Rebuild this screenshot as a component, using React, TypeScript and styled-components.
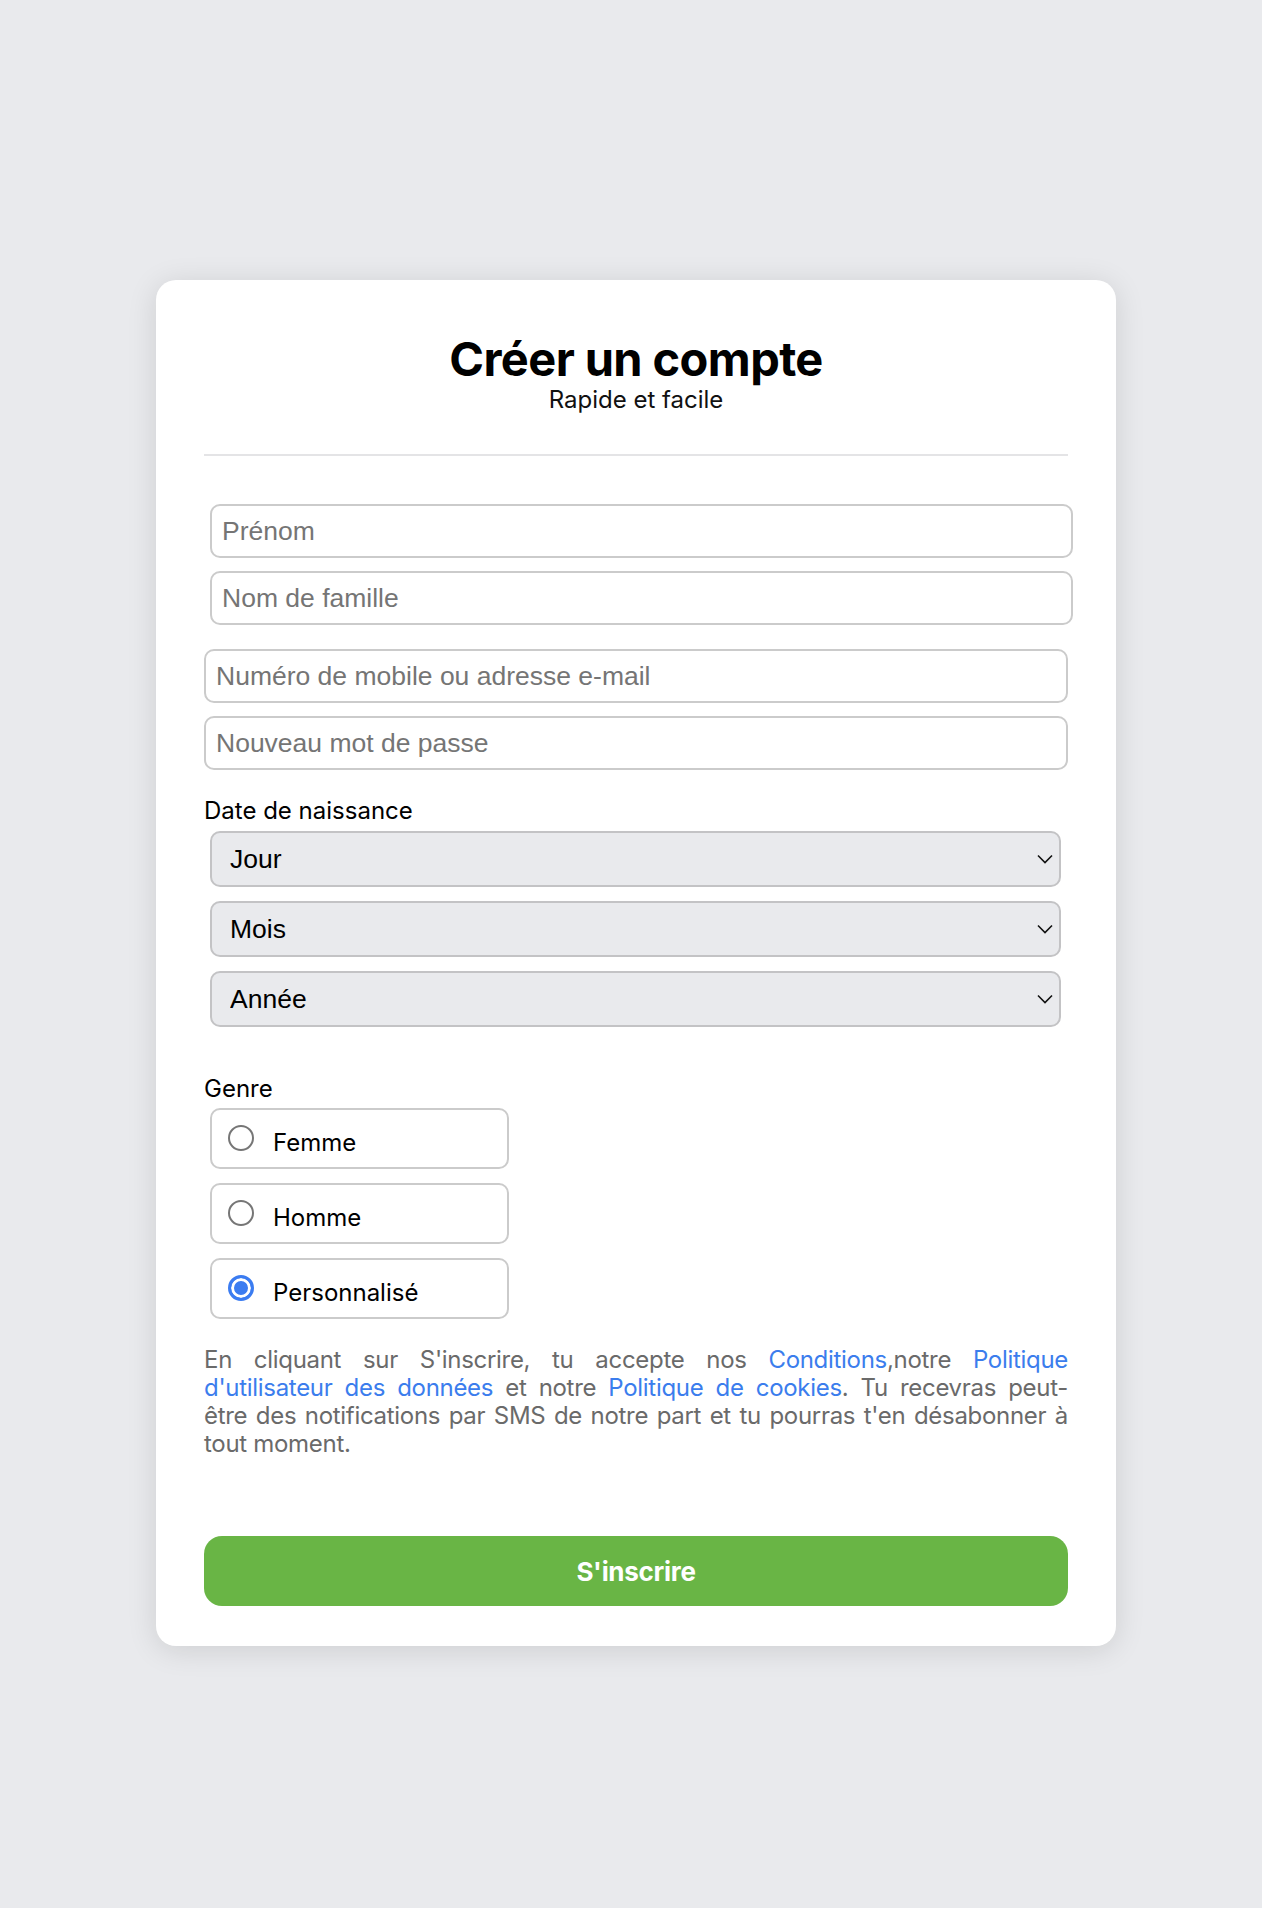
import React, { useState } from "react";
import styled, { createGlobalStyle } from "styled-components";

const GlobalStyle = createGlobalStyle`
  * {
    box-sizing: border-box;
  }
  body {
    margin: 0;
    background-color: #e9eaed;
    font-family: Inter, "Liberation Sans", sans-serif;
  }
`;

export default function App() {
  const [gender, setGender] = useState<string>("custom");

  return (
    <>
      <GlobalStyle />
      <Page>
        <Card>
          <Header>
            <Title>Créer un compte</Title>
            <Subtitle>Rapide et facile</Subtitle>
          </Header>
          <Divider />

          <NameGroup>
            <Input type="text" placeholder="Prénom" />
            <Input type="text" placeholder="Nom de famille" />
          </NameGroup>

          <FieldGroup>
            <Input type="text" placeholder="Numéro de mobile ou adresse e-mail" />
            <Input type="password" placeholder="Nouveau mot de passe" />
          </FieldGroup>

          <Label>Date de naissance</Label>
          <SelectGroup>
            {["Jour", "Mois", "Année"].map((name) => (
              <SelectWrap key={name}>
                <Select defaultValue="">
                  <option value="">{name}</option>
                </Select>
                <Chevron viewBox="0 0 16 10" width={16} height={10}>
                  <path d="M1 1.5 L8 8.5 L15 1.5" fill="none" stroke="#111" strokeWidth="1.6" />
                </Chevron>
              </SelectWrap>
            ))}
          </SelectGroup>

          <Label $spaced>Genre</Label>
          <RadioGroup>
            {[
              { value: "f", label: "Femme" },
              { value: "h", label: "Homme" },
              { value: "custom", label: "Personnalisé" },
            ].map((item) => (
              <RadioBox key={item.value}>
                <Radio
                  type="radio"
                  name="gender"
                  checked={gender === item.value}
                  onChange={() => setGender(item.value)}
                />
                <RadioText>{item.label}</RadioText>
              </RadioBox>
            ))}
          </RadioGroup>

          {/* coupure forcée après "peut-" comme sur la maquette */}
          <Terms>
            <TermsPart $fill>
              En cliquant sur S'inscrire, tu accepte nos <Link>Conditions</Link>,notre{" "}
              <Link>Politique d'utilisateur des données</Link> et notre{" "}
              <Link>Politique de cookies</Link>. Tu recevras peut-
            </TermsPart>
            <TermsPart>
              être des notifications par SMS de notre part et tu pourras t'en désabonner à tout
              moment.
            </TermsPart>
          </Terms>

          <SubmitBtn type="button">S'inscrire</SubmitBtn>
        </Card>
      </Page>
    </>
  );
}

const Page = styled.div`
  min-height: 1908px;
  padding: 280px 0 0 10px;
  display: flex;
  justify-content: center;
  align-items: flex-start;
`;

const Card = styled.div`
  width: 960px;
  padding: 48px 48px 40px;
  background-color: #ffffff;
  border-radius: 20px;
  box-shadow: 0 4px 30px rgba(0, 0, 0, 0.12);
  display: flex;
  flex-direction: column;
`;

const Header = styled.div`
  padding-top: 5px;
  text-align: center;
`;

const Title = styled.h1`
  margin: 0;
  font-size: 47px;
  line-height: 52px;
  font-weight: 700;
  letter-spacing: -0.6px;
  color: #000;
`;

const Subtitle = styled.p`
  margin: 1px 0 0;
  font-size: 24px;
  line-height: 28px;
  color: #111;
`;

const Divider = styled.hr`
  margin: 40px 0 0;
  border: none;
  height: 2px;
  background-color: #e4e4e6;
`;

const NameGroup = styled.div`
  margin: 48px -5px 0 6px;
  display: flex;
  flex-direction: column;
  gap: 13px;
`;

const FieldGroup = styled.div`
  margin-top: 24px;
  display: flex;
  flex-direction: column;
  gap: 13px;
`;

const Input = styled.input`
  width: 100%;
  height: 54px;
  padding: 0 10px;
  border: 2px solid #cbcbcb;
  border-radius: 10px;
  outline: none;
  font-family: "Liberation Sans", Arial, sans-serif;
  font-size: 26.5px;
  color: #111;
  ::placeholder {
    color: #767676;
  }
`;

const Label = styled.div<{ $spaced?: boolean }>`
  margin-top: ${({ $spaced }) => ($spaced ? "47px" : "26px")};
  font-size: 24px;
  line-height: 29px;
  color: #000;
`;

const SelectGroup = styled.div`
  margin: 6px 0 0 6px;
  width: 851px;
  display: flex;
  flex-direction: column;
  gap: 14px;
`;

const SelectWrap = styled.div`
  position: relative;
`;

const Select = styled.select`
  width: 100%;
  height: 56px;
  padding: 0 40px 0 18px;
  appearance: none;
  background-color: #e9eaed;
  border: 2px solid #c3c3c5;
  border-radius: 10px;
  outline: none;
  font-family: "Liberation Sans", Arial, sans-serif;
  font-size: 26.5px;
  color: #000;
`;

const Chevron = styled.svg`
  position: absolute;
  right: 8px;
  top: 50%;
  transform: translateY(-50%);
  pointer-events: none;
`;

const RadioGroup = styled.div`
  margin: 5px 0 0 6px;
  display: flex;
  flex-direction: column;
  gap: 14px;
`;

const RadioBox = styled.label`
  width: 299px;
  height: 61px;
  padding: 0 16px;
  display: flex;
  align-items: center;
  gap: 19px;
  border: 2px solid #cbcbcb;
  border-radius: 10px;
  cursor: pointer;
`;

const Radio = styled.input`
  appearance: none;
  margin: -2px 0 0;
  width: 26px;
  height: 26px;
  flex-shrink: 0;
  border-radius: 50%;
  border: 2px solid #767676;
  background-color: #fff;
  &:checked {
    border: 3px solid #3b7cf1;
    background-color: #3b7cf1;
    box-shadow: inset 0 0 0 3px #fff;
  }
`;

const RadioText = styled.span`
  padding-top: 8px;
  font-size: 24px;
  color: #000;
`;

const Terms = styled.p`
  margin: 27px 0 0;
  font-size: 24px;
  line-height: 28px;
  letter-spacing: -0.3px;
  text-align: justify;
  color: #6a6a6a;
`;

const TermsPart = styled.span<{ $fill?: boolean }>`
  display: block;
  text-align-last: ${({ $fill }) => ($fill ? "justify" : "auto")};
`;

const Link = styled.a`
  color: #3b7ded;
  cursor: pointer;
`;

const SubmitBtn = styled.button`
  margin-top: 78px;
  width: 100%;
  height: 70px;
  border: none;
  border-radius: 18px;
  background-color: #69b545;
  color: #fff;
  font-family: Inter, "Liberation Sans", sans-serif;
  font-size: 26px;
  font-weight: 700;
  letter-spacing: -0.3px;
  cursor: pointer;
`;
